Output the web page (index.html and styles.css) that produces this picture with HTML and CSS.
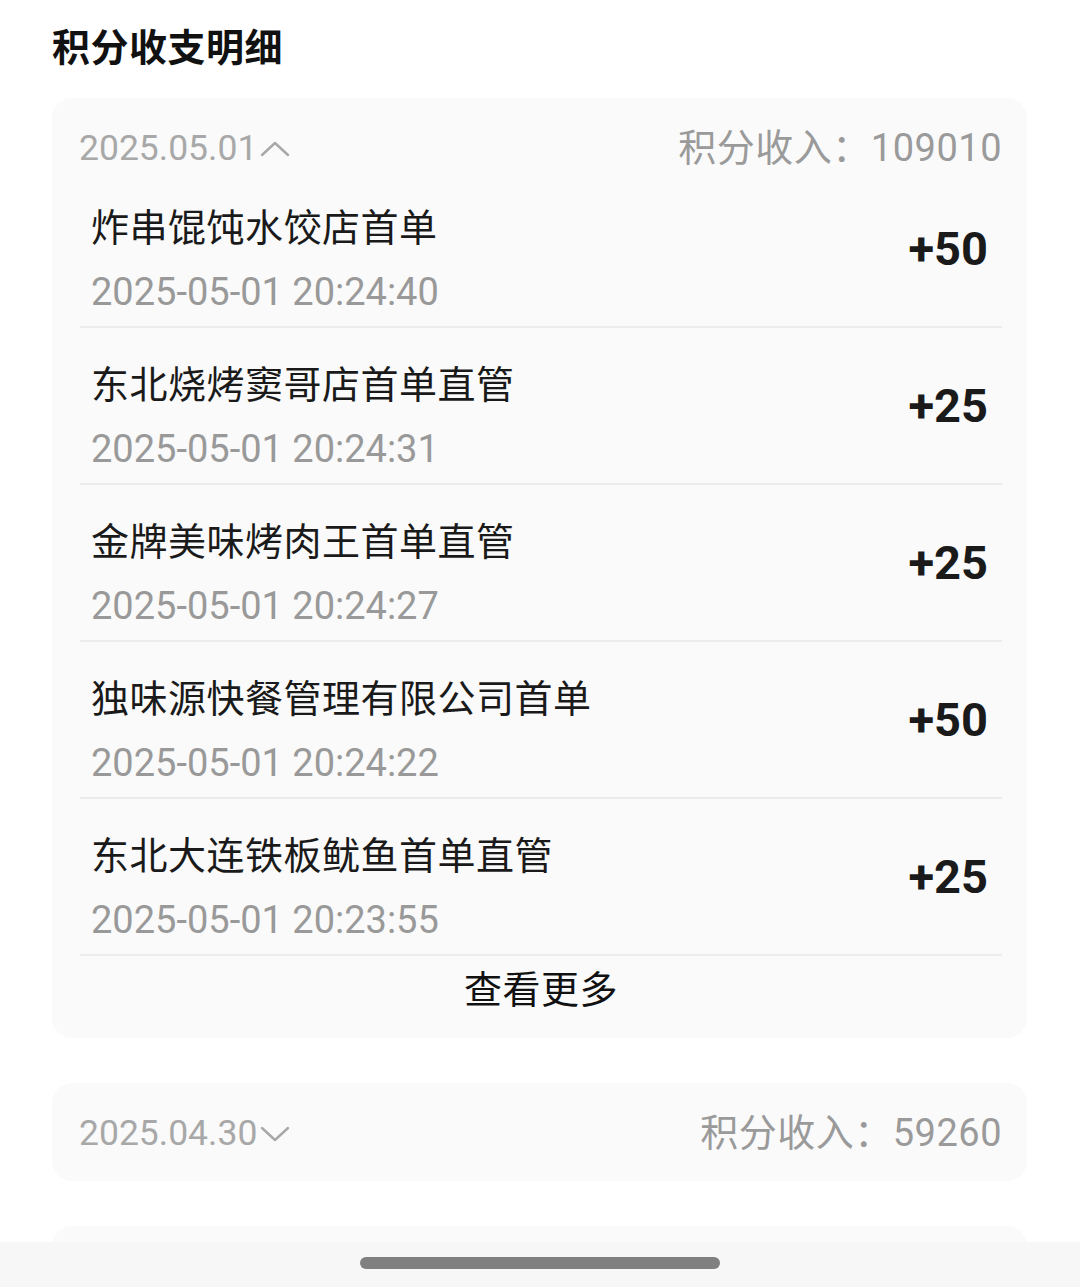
FILE: index.html
```html
<!DOCTYPE html>
<html lang="zh-CN">
<head>
<meta charset="utf-8">
<title>积分收支明细</title>
<link rel="stylesheet" href="styles.css">
</head>
<body>
<div class="page">
  <h1 class="page-title">积分收支明细</h1>

  <section class="card">
    <div class="card-head">
      <div class="head-date">2025.05.01<svg class="chev" width="30" height="16" viewBox="0 0 30 16"><path d="M2 14 L15 2 L28 14" fill="none" stroke="#a8a8a8" stroke-width="2.4" stroke-linecap="round" stroke-linejoin="round"/></svg></div>
      <div class="head-sum">积分收入：109010</div>
    </div>
    <ul class="rows">
      <li class="row">
        <div class="row-main">
          <div class="row-title">炸串馄饨水饺店首单</div>
          <div class="row-time">2025-05-01 20:24:40</div>
        </div>
        <div class="row-amount">+50</div>
      </li>
      <li class="row">
        <div class="row-main">
          <div class="row-title">东北烧烤窦哥店首单直管</div>
          <div class="row-time">2025-05-01 20:24:31</div>
        </div>
        <div class="row-amount">+25</div>
      </li>
      <li class="row">
        <div class="row-main">
          <div class="row-title">金牌美味烤肉王首单直管</div>
          <div class="row-time">2025-05-01 20:24:27</div>
        </div>
        <div class="row-amount">+25</div>
      </li>
      <li class="row">
        <div class="row-main">
          <div class="row-title">独味源快餐管理有限公司首单</div>
          <div class="row-time">2025-05-01 20:24:22</div>
        </div>
        <div class="row-amount">+50</div>
      </li>
      <li class="row">
        <div class="row-main">
          <div class="row-title">东北大连铁板鱿鱼首单直管</div>
          <div class="row-time">2025-05-01 20:23:55</div>
        </div>
        <div class="row-amount">+25</div>
      </li>
    </ul>
    <div class="more">查看更多</div>
  </section>

  <section class="card card-collapsed">
    <div class="card-head">
      <div class="head-date">2025.04.30<svg class="chev" width="30" height="16" viewBox="0 0 30 16"><path d="M2 2 L15 14 L28 2" fill="none" stroke="#a8a8a8" stroke-width="2.4" stroke-linecap="round" stroke-linejoin="round"/></svg></div>
      <div class="head-sum">积分收入：59260</div>
    </div>
  </section>

  <section class="card card-peek"></section>
</div>

<div class="home-bar"><div class="home-indicator"></div></div>
</body>
</html>
```

FILE: styles.css
```css
html, body {
  margin: 0;
  padding: 0;
  height: 1287px;
  overflow: hidden;
  background: #ffffff;
}

body {
  font-family: Roboto, "Noto Sans CJK SC", sans-serif;
  color: #1a1a1a;
}

.page {
  padding: 0 53px 0 52px;
}

.page-title {
  margin: 0;
  padding-top: 24px;
  font-size: 38px;
  line-height: 48px;
  font-weight: 700;
  color: #111111;
  letter-spacing: 0.5px;
}

.card {
  margin-top: 26px;
  background: #fafafa;
  border-radius: 20px;
  padding: 0 25px 0 28px;
}

.card + .card {
  margin-top: 45px;
}

.card-collapsed {
  padding-bottom: 25px;
}

.card-peek {
  height: 100px;
}

.card-head {
  display: flex;
  justify-content: space-between;
  align-items: center;
  padding-top: 30px;
  padding-bottom: 3px;
  line-height: 40px;
  height: 40px;
}

.head-date {
  display: flex;
  align-items: center;
  font-size: 35.5px;
  color: #a8a8a8;
  margin-left: -1px;
}

.chev {
  margin-left: 3px;
  margin-top: 2px;
}

.head-sum {
  font-size: 38px;
  letter-spacing: 0.5px;
  color: #9a9a9a;
}

.rows {
  list-style: none;
  margin: 0;
  padding: 0;
}

.row {
  display: flex;
  justify-content: space-between;
  align-items: center;
  height: 155px;
  box-sizing: content-box;
  border-bottom: 2px solid #ececec;
  padding: 0 14px 0 11px;
}

.row-main {
  display: flex;
  flex-direction: column;
  align-self: stretch;
  padding-top: 33px;
}

.row-title {
  font-size: 38px;
  line-height: 48px;
  color: #1a1a1a;
  letter-spacing: 0.5px;
}

.row-time {
  margin-top: 16px;
  font-size: 38px;
  line-height: 48px;
  color: #999999;
}

.row-amount {
  font-size: 47px;
  font-weight: 700;
  color: #1a1a1a;
}

.more {
  text-align: center;
  font-size: 38px;
  line-height: 48px;
  padding: 10px 0 24px;
  color: #111111;
  letter-spacing: 0.5px;
}

.home-bar {
  position: fixed;
  left: 0;
  right: 0;
  bottom: 0;
  height: 45px;
  background: #f7f7f7;
  display: flex;
  justify-content: center;
  padding-top: 15px;
  box-sizing: border-box;
}

.home-indicator {
  width: 360px;
  height: 12px;
  border-radius: 6px;
  background: #808080;
}
```
